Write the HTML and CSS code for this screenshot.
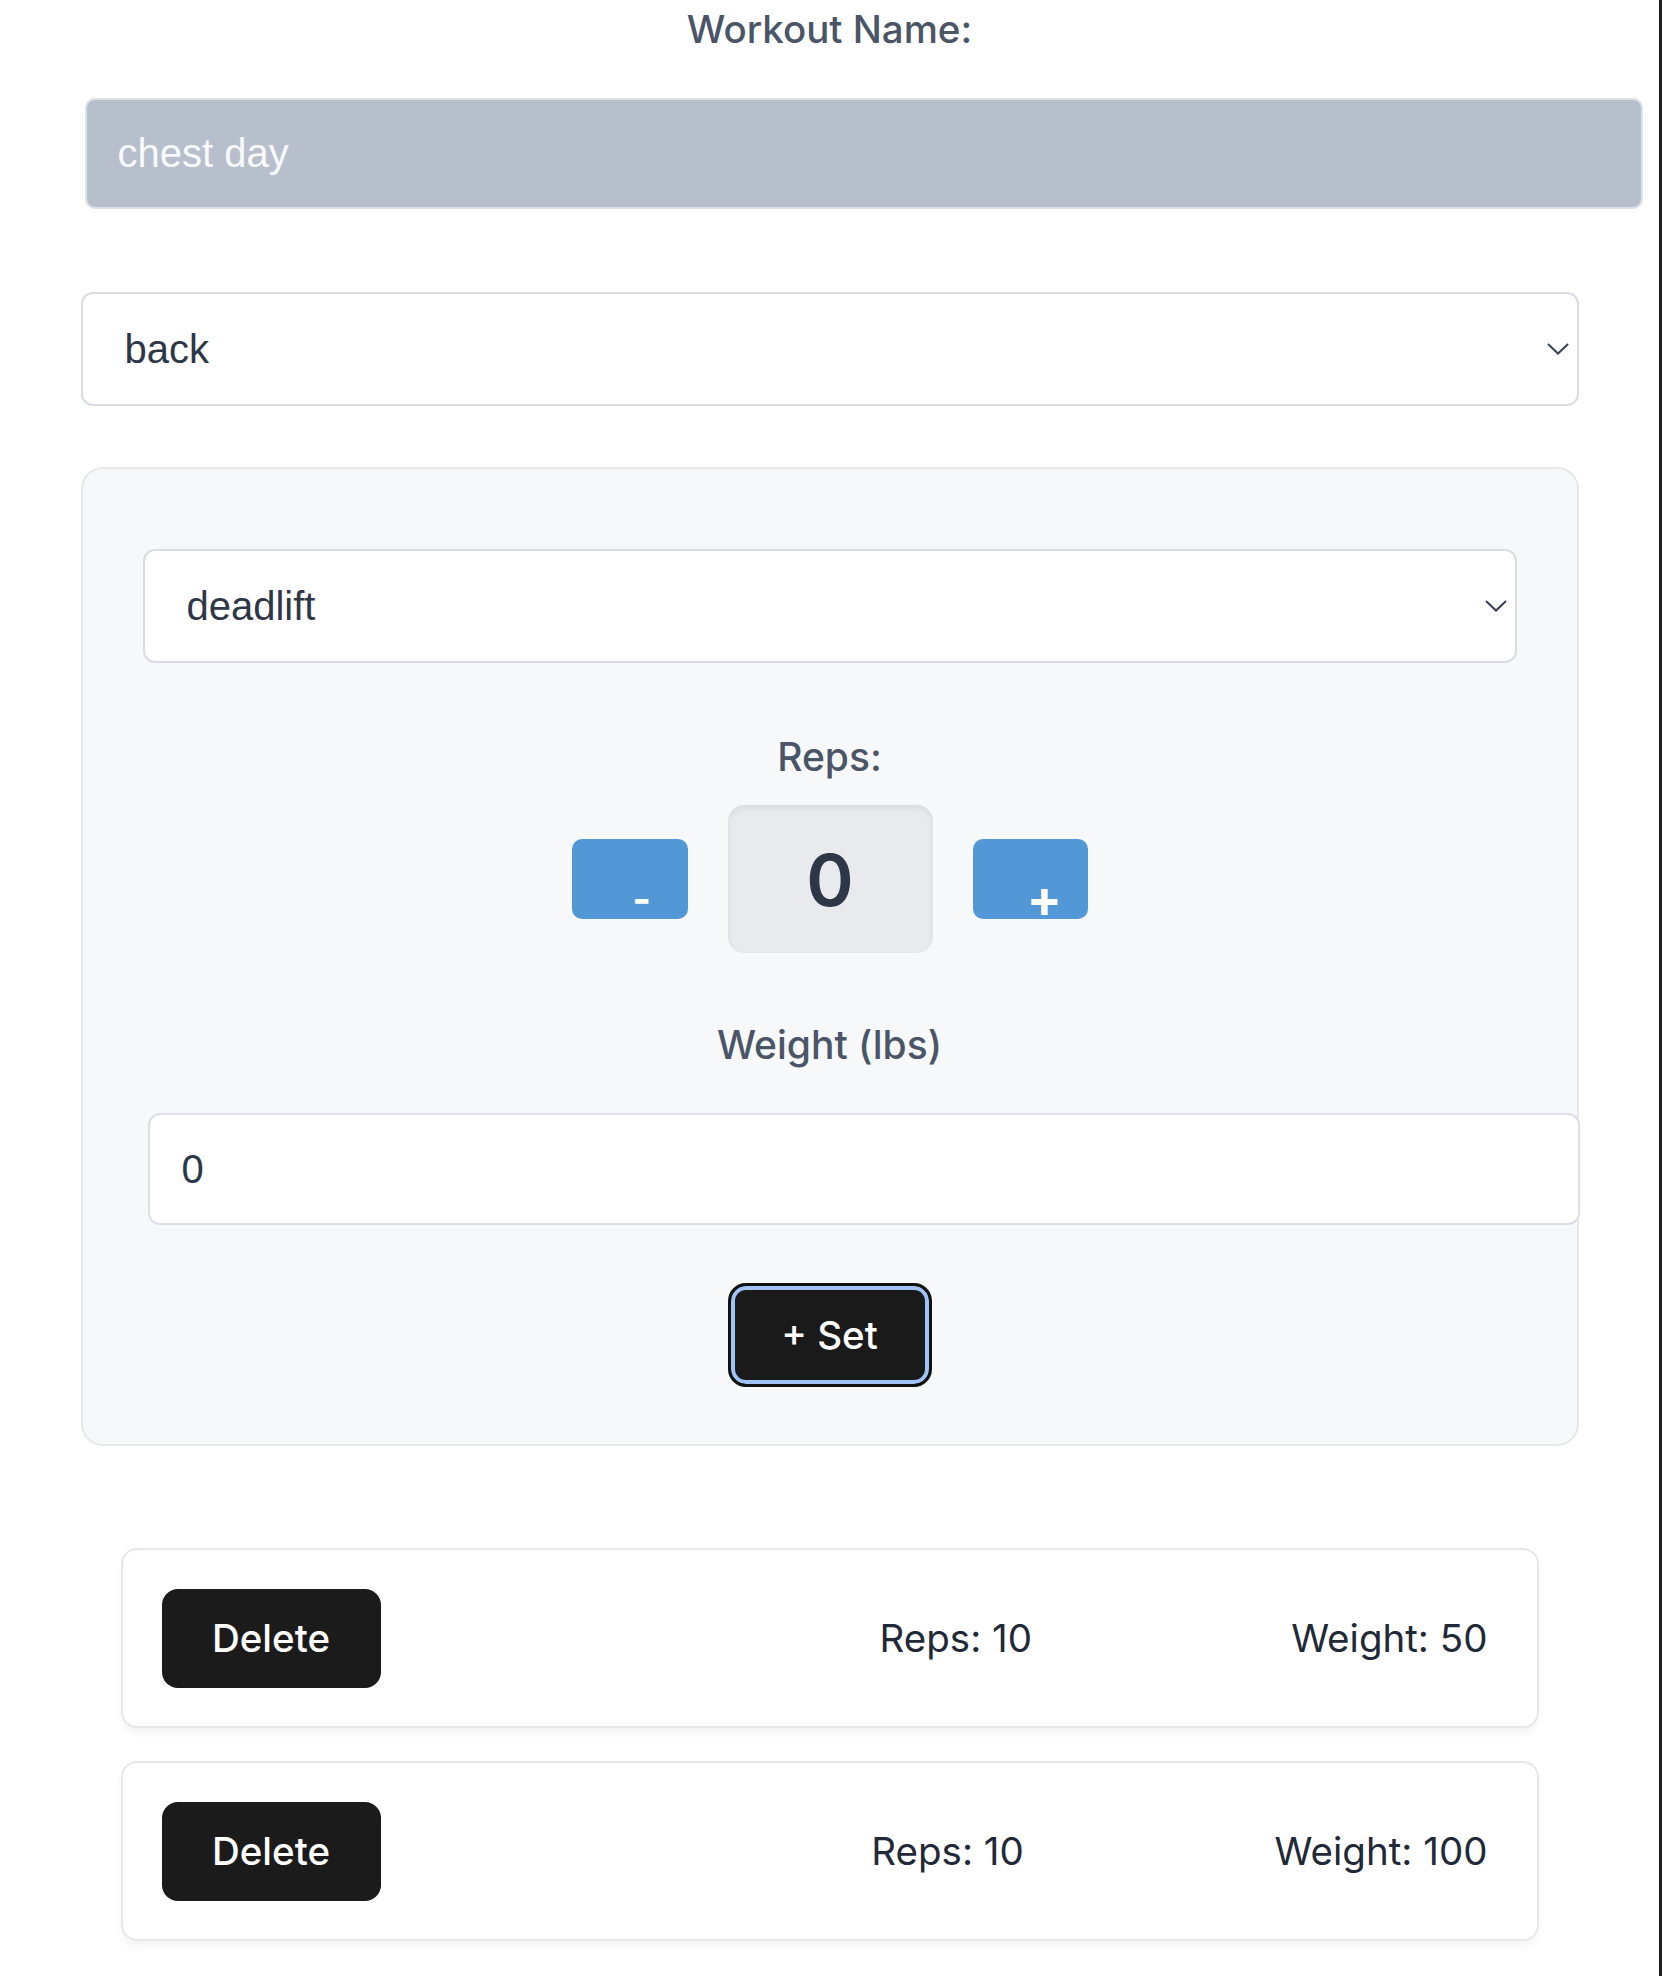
FILE: index.html
```html
<!DOCTYPE html>
<html lang="en">
<head>
<meta charset="utf-8">
<title>Workout</title>
<link rel="stylesheet" href="styles.css">
</head>
<body>
<div class="page">
  <h1 class="title">Workout Name:</h1>
  <div class="container">
    <input class="name-input" type="text" value="chest day">
    <div class="select">
      <span>back</span>
      <svg class="chevron" width="22" height="12" viewBox="0 0 22 12"><polyline points="1,1 11,10.5 21,1" fill="none" stroke="#374151" stroke-width="2"/></svg>
    </div>
    <div class="card">
      <div class="select inner">
        <span>deadlift</span>
        <svg class="chevron" width="22" height="12" viewBox="0 0 22 12"><polyline points="1,1 11,10.5 21,1" fill="none" stroke="#374151" stroke-width="2"/></svg>
      </div>
      <div class="label reps-label">Reps:</div>
      <div class="counter">
        <button class="step minus">-</button>
        <div class="count">0</div>
        <button class="step plus">+</button>
      </div>
      <div class="label weight-label">Weight (lbs)</div>
      <input class="weight-input" type="text" value="0">
      <button class="add-set">+ Set</button>
    </div>
    <div class="sets">
      <div class="set-row">
        <button class="delete">Delete</button>
        <span class="reps">Reps: 10</span>
        <span class="weight">Weight: 50</span>
      </div>
      <div class="set-row">
        <button class="delete">Delete</button>
        <span class="reps">Reps: 10</span>
        <span class="weight">Weight: 100</span>
      </div>
    </div>
  </div>
</div>
</body>
</html>
```
FILE: styles.css
```css
html, body {
  margin: 0;
  padding: 0;
  background: #ffffff;
}

body {
  font-family: Inter, "Liberation Sans", sans-serif;
}

.page {
  box-sizing: border-box;
  min-height: 1976px;
  padding-top: 2px;
  border-right: 3px solid #1e1e1e;
}

.title {
  margin: 0;
  text-align: center;
  font-family: Inter, sans-serif;
  font-size: 38.5px;
  line-height: 55px;
  font-weight: 500;
  color: #4a5568;
}

.container {
  width: 1498px;
  margin: 0 auto;
}

.name-input {
  display: block;
  box-sizing: border-box;
  width: calc(100% + 60px);
  height: 111px;
  margin: 41px 0 0 4px;
  padding: 0 31px;
  border: 2px solid #dde1e8;
  border-radius: 10px;
  background: #b8bfcc;
  color: #f8f9fb;
  font-family: "Liberation Sans", Arial, sans-serif;
  font-size: 40px;
  outline: none;
}

.select {
  box-sizing: border-box;
  height: 114px;
  margin-top: 83px;
  padding: 0 8px 0 42px;
  display: flex;
  align-items: center;
  justify-content: space-between;
  background: #ffffff;
  border: 2px solid #d9dce3;
  border-radius: 12px;
  font-family: "Liberation Sans", Arial, sans-serif;
  font-size: 40px;
  color: #2d3748;
}

.select.inner {
  margin-top: 0;
}

.chevron {
  display: block;
}

.card {
  margin-top: 61px;
  padding: 80px 60px 57px;
  background: #f7f8fa;
  border: 2px solid #e5e7eb;
  border-radius: 22px;
}

.label {
  text-align: center;
  font-family: Inter, sans-serif;
  font-size: 39px;
  line-height: 57px;
  font-weight: 500;
  color: #4a5568;
}

.reps-label {
  margin-top: 65px;
}

.weight-label {
  margin-top: 63px;
}

.counter {
  margin-top: 20px;
  display: flex;
  justify-content: center;
  align-items: center;
  gap: 40px;
}

.step {
  box-sizing: border-box;
  width: 116px;
  height: 80px;
  padding: 40px 0 0 24px;
  border: none;
  border-radius: 10px;
  background: #5398d6;
  color: #ffffff;
  font-family: Inter, sans-serif;
  font-size: 40px;
  font-weight: 700;
  line-height: 1;
  display: flex;
  align-items: center;
  justify-content: center;
}

.step.plus {
  width: 115px;
  padding-left: 29px;
  font-size: 52px;
}

.count {
  width: 205px;
  height: 148px;
  display: flex;
  align-items: center;
  justify-content: center;
  background: #e9eaee;
  border-radius: 16px;
  box-shadow: inset 0 3px 6px rgba(0, 0, 0, 0.07);
  font-family: Inter, sans-serif;
  font-size: 72px;
  font-weight: 600;
  color: #2d3748;
}

.weight-input {
  display: block;
  box-sizing: border-box;
  width: calc(100% + 58px);
  height: 112px;
  margin: 40px 0 0 5px;
  padding: 0 32px;
  border: 2px solid #dcdfe5;
  border-radius: 12px;
  background: #ffffff;
  color: #2d3748;
  font-family: "Liberation Sans", Arial, sans-serif;
  font-size: 40px;
  outline: none;
}

.add-set {
  display: block;
  box-sizing: border-box;
  width: 204px;
  height: 104px;
  margin: 58px auto 0;
  border: 3px solid #111111;
  border-radius: 18px;
  box-shadow: inset 0 0 0 4px #9ec3f4;
  background: #1a1a1a;
  color: #ffffff;
  font-family: Inter, sans-serif;
  font-size: 38.5px;
  font-weight: 500;
}

.sets {
  margin: 102px 40px 0;
  display: flex;
  flex-direction: column;
  gap: 33px;
}

.set-row {
  box-sizing: border-box;
  height: 180px;
  padding: 0 49px 0 39px;
  display: flex;
  align-items: center;
  justify-content: space-between;
  background: #ffffff;
  border: 2px solid #e5e7eb;
  border-radius: 16px;
  box-shadow: 0 6px 10px -2px rgba(0, 0, 0, 0.06);
}

.delete {
  width: 219px;
  height: 99px;
  border: none;
  border-radius: 16px;
  background: #1b1b1b;
  color: #ffffff;
  font-family: Inter, sans-serif;
  font-size: 38.5px;
  font-weight: 500;
}

.reps,
.weight {
  font-family: Inter, sans-serif;
  font-size: 38.5px;
  color: #1f2937;
}

.reps {
  margin-left: 240px;
}
```
